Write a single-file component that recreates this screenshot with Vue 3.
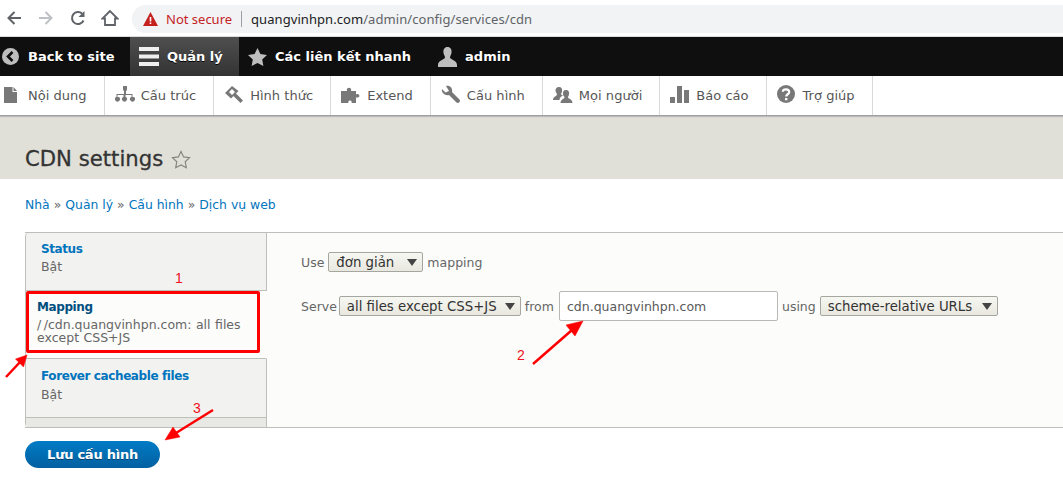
<script setup>
const tray = [
  { label: 'Nội dung', d: 'M2 2h8.500v5H15v11H2zM11.500 2 15 6h-3.500z' },
  { label: 'Cấu trúc', d: 'M8 1h4v4.500h-1V9h6.500v3H19a2.500 2.500 0 1 1-3 0h.500v-2h-6v2H11a2.500 2.500 0 1 1-3 0h.500v-2h-6v2H4a2.500 2.500 0 1 1-3 0h.500V9H9V5.500H8z' },
  { label: 'Hình thức', d: 'M8 1 1 8l6 5.500 2.500-2.500 7 7 2.500-2.500-7-7L14.500 6zM8 4 5 7l3 3 3-3z' },
  { label: 'Extend', d: 'M0 6h6C4.500 1.500 11.500 1.500 10 6h5v3.500c3.500-2 5.500 4 0 3V18h-4.500c1.500-3.500-4.500-3.500-3 0H0z' },
  { label: 'Cấu hình', d: 'M5 1c3.500-1 7 2 6 6l7.500 7.500c1.500 2-1 4.500-3 3L8 10C4 11 0 7.500 1 4l3.500 3.500L8 6 6.500 3.500z' },
  { label: 'Mọi người', d: 'M6 2c2.500 0 3.500 2 3 4.500-.3 1.500-1 2-1 3l2 1c-2 1-3.500 2-3.500 4.500H0c0-3.500 3.500-3.500 4-5.500 0-1-1.200-2-1.500-3.500C2.300 4 3.500 2 6 2zM13 5c2.500 0 3.500 2 3 4.500-.3 1.500-1 2-1 3 .500 1.500 4.500 1.500 4.500 5.500H7.500c0-4 4-4 4-5.500 0-1-1.200-1.500-1.500-3C9.500 7 10.500 5 13 5z' },
  { label: 'Báo cáo', d: 'M0 12h5v6H0zM7 1h5v17H7zM14 5h5v13h-5z' },
  { label: 'Trợ giúp', help: true },
]
const tabs = [
  { title: 'Status', lines: ['Bật'] },
  { title: 'Mapping', lines: ['/\u2009/cdn.quangvinhpn.com: all files', 'except CSS+JS'], active: true },
  { title: 'Forever cacheable files', lines: ['Bật'] },
]
</script>

<template>
  <div class="page">
    <header class="chrome">
      <div class="nav">
        <svg width="18" height="18" viewBox="0 0 18 18"><path d="M16 9H4M9.500 3 3.500 9l6 6" fill="none" stroke="#5f6368" stroke-width="2"/></svg>
        <svg width="18" height="18" viewBox="0 0 18 18"><path d="M2 9h12M8.500 3l6 6-6 6" fill="none" stroke="#bdc1c6" stroke-width="2"/></svg>
        <svg width="18" height="18" viewBox="0 0 18 18"><path d="M14.500 11.500A6 6 0 1 1 13.200 4.800" fill="none" stroke="#5f6368" stroke-width="2"/><path d="M15.500 2v6h-6z" fill="#5f6368"/></svg>
        <svg width="18" height="18" viewBox="0 0 18 18"><path d="M9 2 1.500 9.500H4V16h10V9.500h2.500z" fill="none" stroke="#5f6368" stroke-width="1.800"/></svg>
      </div>
      <div class="omni">
        <svg width="15" height="14" viewBox="0 0 15 14" class="warn"><path d="M7.500 0 15 14H0z" fill="#c5221f"/><path d="M6.700 5h1.600v4.500H6.700zM6.700 10.500h1.600V12H6.700z" fill="#fff"/></svg>
        <span class="insecure">Not secure</span>
        <span class="bar"></span>
        <span class="url"><b>quangvinhpn.com</b>/admin/config/services/cdn</span>
      </div>
    </header>

    <nav class="toolbar">
      <a class="tool first">
        <svg width="17" height="17" viewBox="0 0 17 17"><circle cx="8.500" cy="8.500" r="8.500" fill="#bebebe"/><path d="M10.500 4 6 8.500l4.500 4.500" fill="none" stroke="#0f0f0f" stroke-width="2.600"/></svg>
        Back to site
      </a>
      <a class="tool active">
        <svg width="20" height="19" viewBox="0 0 20 19"><path d="M0 0h20v4H0zM0 7.500h20v4H0zM0 15h20v4H0z" fill="#eee"/></svg>
        Quản lý
      </a>
      <a class="tool links">
        <svg width="19" height="18" viewBox="0 0 19 18"><path d="m9.500 0 2.900 6 6.600.9-4.800 4.600 1.200 6.500-5.900-3.100L3.600 18l1.200-6.500L0 6.900 6.600 6z" fill="#bebebe"/></svg>
        Các liên kết nhanh
      </a>
      <a class="tool user">
        <svg width="19" height="20" viewBox="0 0 19 20"><path d="M9.500 0c3 0 4.500 2.500 4 6-.4 2-1.500 3-1.500 4.500 0 2 7 2.500 7 7.500v2H0v-2c0-5 7-5.500 7-7.500C7 9 5.900 8 5.500 6c-.5-3.500 1-6 4-6z" fill="#bebebe"/></svg>
        admin
      </a>
    </nav>

    <nav class="tray">
      <a v-for="item in tray" :key="item.label" class="tray-item">
        <svg v-if="item.help" width="18" height="18" viewBox="0 0 18 18" class="tray-ic"><circle cx="9" cy="9" r="9" fill="#787878"/><path d="M5.800 6.800C6 3.500 12.200 3.500 12.200 7c0 2.300-3 2.200-3 4.500" fill="none" stroke="#fff" stroke-width="2.200"/><path d="M8 13h2.400v2.300H8z" fill="#fff"/></svg>
        <svg v-else width="20" height="19" viewBox="0 0 20 19" class="tray-ic"><path :d="item.d" fill="#787878" fill-rule="evenodd"/></svg>
        {{ item.label }}
      </a>
    </nav>

    <div class="head">
      <h1>CDN settings</h1>
      <svg width="20" height="19" viewBox="0 0 20 19"><path d="m10 1.500 2.600 5.400 5.900.8-4.300 4.100 1.100 5.900-5.300-2.800-5.300 2.800 1.100-5.900-4.300-4.100 5.900-.8z" fill="none" stroke="#868680" stroke-width="1.200"/></svg>
    </div>

    <div class="crumbs">
      <a>Nhà</a><i>»</i><a>Quản lý</a><i>»</i><a>Cấu hình</a><i>»</i><a>Dịch vụ web</a>
    </div>

    <section class="tabs">
      <div class="menu">
        <div v-for="tab in tabs" :key="tab.title" class="tab" :class="{ on: tab.active }">
          <a class="tab-title">{{ tab.title }}</a>
          <span v-for="line in tab.lines" :key="line" class="tab-sum">{{ line }}</span>
        </div>
        <div class="filler"></div>
      </div>
      <div class="pane">
        <div class="row r1">
          <span>Use</span>
          <span class="select s1">đơn giản</span>
          <span>mapping</span>
        </div>
        <div class="row r2">
          <span>Serve</span>
          <span class="select s2">all files except CSS+JS</span>
          <span>from</span>
          <input class="text" value="cdn.quangvinhpn.com" />
          <span>using</span>
          <span class="select s3">scheme-relative URLs</span>
        </div>
      </div>
    </section>

    <button class="save">Lưu cấu hình</button>

    <div class="redbox"></div>
    <span class="mark m1">1</span>
    <span class="mark m2">2</span>
    <span class="mark m3">3</span>
    <svg class="arrows" width="1063" height="481" viewBox="0 0 1063 481">
      <g fill="#f00" stroke="#f00">
        <path d="M6 377 21 361" stroke-width="2.500"/>
        <path d="M27 355 23.500 367 15.500 359z" stroke-width=".5"/>
        <path d="M533 364 572 330" stroke-width="2.500"/>
        <path d="M583 321 575 336 566 325z" stroke-width=".5"/>
        <path d="M213 410 176 433" stroke-width="2.500"/>
        <path d="M165 440 173 427 180 437z" stroke-width=".5"/>
      </g>
    </svg>
  </div>
</template>

<style>
html, body { margin: 0; background: #fff; }
</style>

<style scoped>
.page {
  position: relative;
  width: 1063px;
  height: 481px;
  overflow: hidden;
  font-family: "DejaVu Sans", Verdana, sans-serif;
  font-size: 13px;
  color: #666;
}

.chrome {
  height: 36px;
  border-bottom: 1px solid #dcdcdc;
  display: flex;
  align-items: center;
  background: #fff;
}
.nav { width: 132px; flex: none; display: flex; padding-left: 5px; box-sizing: border-box; gap: 14px; }
.omni {
  flex: 1;
  height: 28px;
  margin-top: 1px;
  background: #f1f3f4;
  border-radius: 14px 0 0 14px;
  display: flex;
  align-items: center;
  padding-left: 11px;
  font-family: "Noto Sans", sans-serif;
  font-size: 13px;
}
.warn { margin-right: 8px; }
.insecure { color: #c5221f; width: 75px; white-space: nowrap; }
.bar { width: 1px; height: 16px; background: #9aa0a6; margin-right: 9px; }
.url { color: #5f6368; white-space: nowrap; letter-spacing: .07px; }
.url b { color: #202124; font-weight: 400; }

.toolbar {
  height: 39px;
  background: #0f0f0f;
  display: flex;
}
.tool {
  display: flex;
  align-items: center;
  box-sizing: border-box;
  color: #fff;
  font-weight: 700;
  font-size: 13px;
  white-space: nowrap;
  padding-left: 9px;
  gap: 8px;
  text-shadow: 0 1px 0 #000;
}
.tool.first { padding-left: 2px; gap: 9px; width: 130px; }
.tool.active { width: 109px; background: linear-gradient(#4f4f4f, #333); }
.tool.user { padding-left: 27px; }

.tray {
  height: 39px;
  display: flex;
  background: #fff;
  box-shadow: 0 1px 0 #a0a0a0, 0 2px 1px #bbb;
  position: relative;
}
.tray-item {
  display: flex;
  align-items: center;
  white-space: nowrap;
  color: #565656;
  padding: 0 17px 0 36px;
  border-right: 1px solid #d9d9d9;
  position: relative;
  letter-spacing: .03px;
}
.tray-item:first-child { padding-left: 28px; }
.tray-ic { position: absolute; left: 10px; top: 9px; }
.tray-item:first-child .tray-ic { left: 2px; }

.head {
  height: 64px;
  background: #e0e0d8;
  padding: 0 25px;
  box-sizing: border-box;
  display: flex;
  align-items: flex-end;
  gap: 8px;
}
.head h1 {
  margin: 0 0 7px;
  font-size: 21.2px;
  line-height: 26px;
  font-weight: 500;
  color: #333;
  -webkit-text-stroke: .3px #333;
}
.head svg { margin-bottom: 10px; }

.crumbs {
  margin: 18px 0 0 25px;
  height: 35px;
  line-height: 16px;
  font-size: 12.4px;
  color: #0074bd;
}
.crumbs i { font-style: normal; color: #666; padding: 0 4px; }

.tabs {
  display: flex;
  height: 196px;
  margin-left: 25px;
  border-top: 1px solid #bfbfba;
  border-bottom: 1px solid #bfbfba;
  box-sizing: border-box;
  background: #fcfcfa;
}
.menu {
  width: 242px;
  flex: none;
  display: flex;
  flex-direction: column;
  background: #f2f2f0;
  border-left: 1px solid #bfbfba;
  border-right: 1px solid #bfbfba;
  border-radius: 4px 0 0 4px;
  box-sizing: border-box;
}
.tab {
  height: 58px;
  padding: 8px 15px;
  box-sizing: border-box;
  border-bottom: 1px solid #bfbfba;
}
.tab.on {
  height: 68px;
  background: #fcfcfa;
  border-right: 1px solid #fcfcfa;
  margin-right: -1px;
  padding: 8px 11px;
}
.tab:nth-child(3) { height: 59px; padding-top: 9px; }
.tab-title {
  display: block;
  font-weight: 700;
  font-size: 12px;
  letter-spacing: -.4px;
  line-height: 16px;
  color: #0074bd;
  margin-bottom: 3px;
}
.on .tab-title { color: #004f80; }
.tab:nth-child(3) .tab-title { margin-bottom: 4px; }
.tab-sum { display: block; font-size: 12.5px; line-height: 13px; color: #666; word-spacing: .5px; }
.filler { flex: 1; background: #e8e8e4; }

.pane { flex: 1; padding-left: 34px; min-width: 0; }
.row { display: flex; align-items: center; gap: 4px; white-space: nowrap; color: #666; font-size: 12.5px; }
.r1 { margin-top: 19px; height: 20px; }
.r2 { margin-top: 19px; height: 30px; }
.select {
  position: relative;
  height: 20px;
  line-height: 19px;
  box-sizing: border-box;
  border: 1px solid #a6a6a0;
  border-radius: 2px;
  background: linear-gradient(#f7f7f2, #e8e8e0);
  color: #333;
  padding-left: 7px;
  font-size: 13.3px;
}
.select::after {
  content: "";
  position: absolute;
  right: 5px;
  top: 6px;
  border: 5px solid transparent;
  border-top: 7px solid #444;
  border-bottom: 0;
}
.s1 { width: 95px; }
.s2 { width: 182px; margin-left: -2px; }
.s3 { width: 178px; }
.text {
  width: 219px;
  height: 30px;
  box-sizing: border-box;
  border: 1px solid #b8b8b4;
  border-radius: 2px;
  background: #fff;
  padding: 0 7px;
  margin-left: 1px;
  font: 12.5px "DejaVu Sans", Verdana, sans-serif;
  color: #595959;
}

.save {
  display: block;
  margin: 13px 0 0 25px;
  width: 135px;
  height: 27px;
  border: 0;
  border-radius: 14px;
  background: linear-gradient(#007bc6, #0360a0);
  color: #fff;
  font: 700 13px "DejaVu Sans", Verdana, sans-serif;
  letter-spacing: -.25px;
  text-shadow: 0 1px 0 rgba(0, 0, 0, .4);
}

.redbox {
  position: absolute;
  left: 26px;
  top: 291px;
  width: 234px;
  height: 62px;
  box-sizing: border-box;
  border: 3px solid #f00;
  border-radius: 2px;
}
.mark {
  position: absolute;
  color: #f01020;
  font: 14px "Liberation Sans", sans-serif;
  line-height: 14px;
}
.m1 { left: 175px; top: 271px; }
.m2 { left: 517px; top: 348px; }
.m3 { left: 193px; top: 401px; }
.arrows { position: absolute; left: 0; top: 0; pointer-events: none; }
</style>
